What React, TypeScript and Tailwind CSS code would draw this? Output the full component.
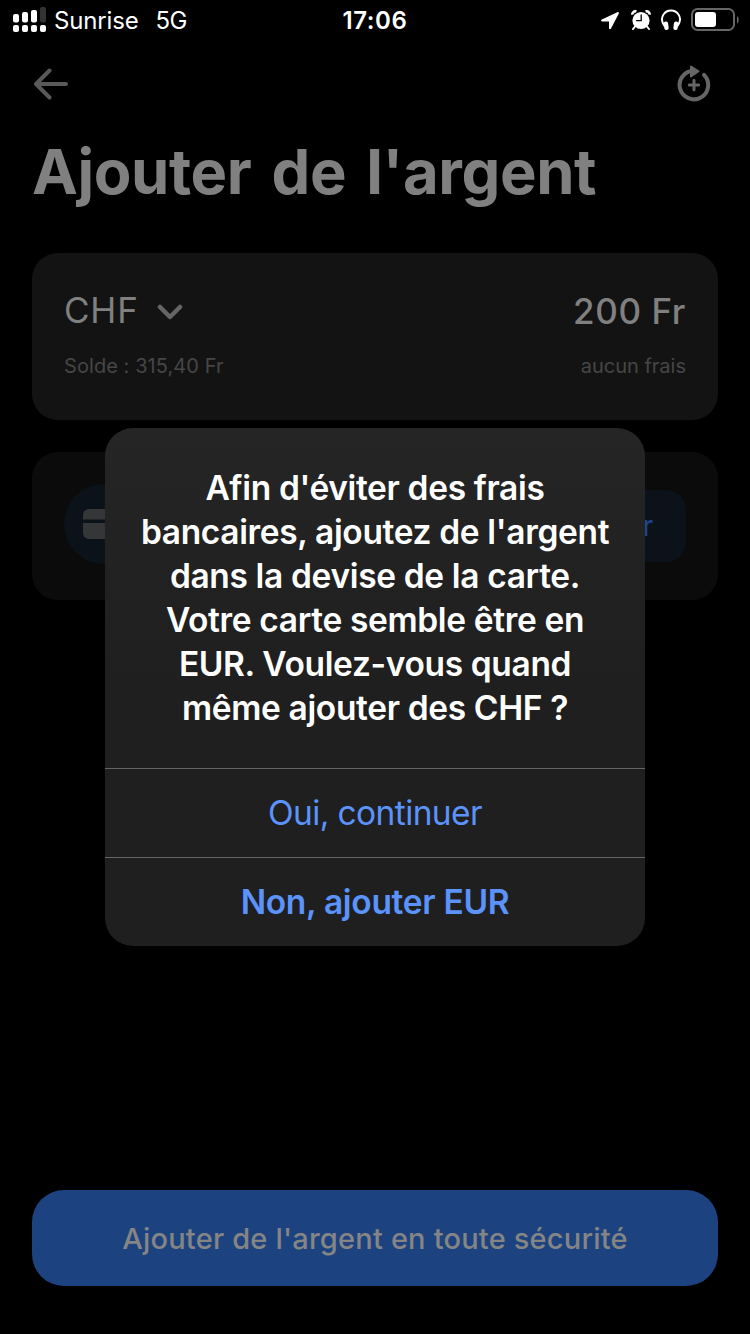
import React from 'react';

const SignalIcon: React.FC = () => (
  <svg width="34" height="26" viewBox="0 0 34 26" fill="#fff">
    <rect x="0" y="7" width="6" height="8.5" rx="2" />
    <rect x="9" y="5" width="6" height="10.5" rx="2" />
    <rect x="18" y="3" width="6" height="12.5" rx="2" />
    <rect x="27" y="0" width="6" height="15.5" rx="2" fill="#333" />
    <rect x="0" y="18" width="6" height="7" rx="2" />
    <rect x="9" y="18" width="6" height="7" rx="2" />
    <rect x="18" y="18" width="6" height="7" rx="2" />
    <rect x="27" y="18" width="6" height="7" rx="2" />
  </svg>
);

const LocationIcon: React.FC = () => (
  <svg width="20" height="20" viewBox="0 0 20 20" fill="#fff">
    <path d="M17.3 2.2 1.8 9.4C.6 10 1 11.5 2.2 11.5H9v6.5c0 1.300 1.500 1.500 2 .5L18.700 3.700C19.200 2.700 18.500 1.700 17.300 2.200Z" />
  </svg>
);

const AlarmIcon: React.FC = () => (
  <svg width="20" height="20" viewBox="0 0 20 20">
    <circle cx="10" cy="10.5" r="8.6" fill="#fff" />
    <path d="M1.3 4.6A3.2 3.2 0 0 1 5.4 1.4M18.7 4.6a3.2 3.2 0 0 0-4.1-3.2" fill="none" stroke="#fff" strokeWidth="2.6" />
    <path d="m4 16.5-2 2.5M16 16.5l2 2.5" stroke="#fff" strokeWidth="2" strokeLinecap="round" />
    <path d="M10.200 5v5.600H5.500" fill="none" stroke="#000" strokeWidth="1.3" strokeLinecap="round" />
  </svg>
);

const HeadphonesIcon: React.FC = () => (
  <svg width="20" height="22" viewBox="0 0 20 22" fill="none">
    <path d="M3.4 17C.6 13 .5 8.5 2.5 5.5c3.500-5.300 11.500-5.300 15 0 2 3 1.900 7.500-.9 11.500" stroke="#fff" strokeWidth="1.9" />
    <rect x="3" y="12.5" width="4.4" height="8.5" rx="2" fill="#fff" transform="rotate(-8 5 17)" />
    <rect x="12.6" y="12.5" width="4.4" height="8.5" rx="2" fill="#fff" transform="rotate(8 15 17)" />
  </svg>
);

const BatteryIcon: React.FC = () => (
  <svg width="49" height="24" viewBox="0 0 49 24" fill="none">
    <rect x="1" y="1" width="42" height="21" rx="5.5" stroke="#666" strokeWidth="2" />
    <rect x="4" y="4" width="21" height="15" rx="3" fill="#fff" />
    <path d="M46 8c2.300 1.500 2.300 6 0 7.500Z" fill="#666" />
  </svg>
);

const BackIcon: React.FC = () => (
  <svg width="36" height="32" viewBox="0 0 36 32" fill="none" stroke="#595959" strokeWidth="4" strokeLinecap="round" strokeLinejoin="round">
    <path d="M34 16H4M17.5 2.5 4 16l13.5 13.5" />
  </svg>
);

const AutoTopUpIcon: React.FC = () => (
  <svg width="34" height="38" viewBox="0 0 34 38" fill="none" stroke="#656565" strokeLinecap="round">
    <path d="M17 5.700A14.300 14.300 0 1 0 27 9.900" strokeWidth="4" />
    <path d="M14 1.500v10l7.500-5.200Z" fill="#656565" strokeWidth="2" strokeLinejoin="round" />
    <path d="M17 15.300v9.400M12.300 20h9.400" strokeWidth="3" />
  </svg>
);

const StatusBar: React.FC = () => (
  <div className="h-10 flex items-center text-white text-[24px] leading-10 pl-[13px] pr-[10px]">
    <div className="flex-1 flex items-center">
      <SignalIcon />
      <span className="ml-[7px] mt-[2px] tracking-[-0.15px]">Sunrise</span>
      <span className="ml-[17px] mt-[2px] tracking-[-0.7px]">5G</span>
    </div>
    <span className="mt-[2px] mr-[3px] font-semibold tracking-[0.6px]">17:06</span>
    <div className="flex-1 flex items-center justify-end">
      <LocationIcon />
      <span className="ml-[11px]"><AlarmIcon /></span>
      <span className="ml-[10px]"><HeadphonesIcon /></span>
      <span className="ml-[10px]"><BatteryIcon /></span>
    </div>
  </div>
);

const AmountCard: React.FC = () => (
  <div className="mt-[41px] h-[167px] rounded-[26px] bg-[#131313] px-8 pt-[36px]">
    <div className="flex items-center justify-between h-11 text-[35px] text-[#808080]">
      <div className="flex items-center -mt-[2px]">
        <span className="tracking-[0.8px]">CHF</span>
        <svg className="ml-[18px] mt-[3px]" width="26" height="16" viewBox="0 0 26 16" fill="none" stroke="#656565" strokeWidth="4.5" strokeLinecap="round" strokeLinejoin="round">
          <path d="m3 3 10 10L23 3" />
        </svg>
      </div>
      <span className="font-medium tracking-[0.6px]">200 Fr</span>
    </div>
    <div className="mt-[18px] flex justify-between text-[20px] leading-[30px] text-[#464646]">
      <span className="tracking-[0.07px]">Solde : 315,40 Fr</span>
      <span>aucun frais</span>
    </div>
  </div>
);

const CardRow: React.FC = () => (
  <div className="mt-8 h-[148px] rounded-[26px] bg-[#0b0b0b] px-8 flex items-center justify-between">
    <div className="w-20 h-20 mb-1 rounded-full bg-[#0c1219] flex items-center justify-center">
      <svg width="42" height="30" viewBox="0 0 42 30" fill="#353638">
        <path d="M0 10.500V6a6 6 0 0 1 6-6h30a6 6 0 0 1 6 6v4.500ZM0 14h42v10a6 6 0 0 1-6 6H6a6 6 0 0 1-6-6Z" />
      </svg>
    </div>
    <div className="h-[72px] w-[156px] rounded-[20px] bg-[#0c1219] text-[#1d4490] text-[28px] font-medium flex items-center justify-end pr-[33px]">
      r
    </div>
  </div>
);

const messageLines = [
  "Afin d'éviter des frais",
  "bancaires, ajoutez de l'argent",
  'dans la devise de la carte.',
  'Votre carte semble être en',
  'EUR. Voulez-vous quand',
  'même ajouter des CHF ?',
];

const Alert: React.FC = () => (
  <div className="absolute left-[105px] top-[428px] w-[540px] h-[518px] rounded-[28px] overflow-hidden bg-linear-to-b from-[#252525] via-[#1f1f1f] to-[#1f1f1f] text-center">
    <div className="h-[340px] pt-[38px] text-white text-[33.5px] leading-[44px] font-semibold tracking-[-0.35px] whitespace-nowrap">
      {messageLines.map((line) => (
        <p key={line}>{line}</p>
      ))}
    </div>
    <button className="block w-full h-[89px] border-t border-[#656565] text-[#5b93fb] text-[33.5px] tracking-[-0.6px]">
      Oui, continuer
    </button>
    <button className="block w-full h-[89px] border-t border-[#656565] text-[#5b93fb] text-[33.5px] font-semibold tracking-[-0.3px]">
      Non, ajouter EUR
    </button>
  </div>
);

const App: React.FC = () => (
  <div className="relative w-[750px] h-[1334px] overflow-hidden bg-black flex flex-col font-[Inter,sans-serif]">
    <StatusBar />
    <div className="flex flex-col flex-1 px-8 pb-12">
      <div className="mt-[25px] h-[38px] flex items-center justify-between pr-[7px]">
        <BackIcon />
        <AutoTopUpIcon />
      </div>
      <h1 className="mt-[33px] h-[76px] text-[61.5px] leading-[72px] font-bold tracking-[-0.4px] [word-spacing:6px] text-[#808080] whitespace-nowrap">
        Ajouter de l'argent
      </h1>
      <AmountCard />
      <CardRow />
      <button className="mt-auto h-24 pt-[2px] rounded-[32px] bg-[#1d4280] text-[#858585] text-[29px] font-medium tracking-[0.2px] whitespace-nowrap">
        Ajouter de l'argent en toute sécurité
      </button>
    </div>
    <Alert />
  </div>
);

export default App;
